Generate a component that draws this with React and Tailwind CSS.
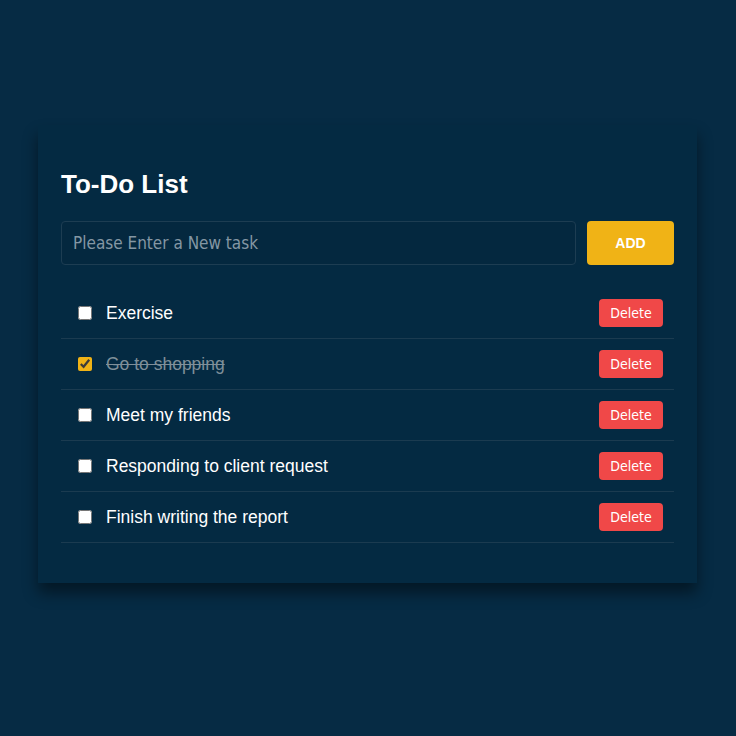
import { useState } from 'react';

const INITIAL_TASKS = [
  { id: 1, text: 'Exercise', done: false },
  { id: 2, text: 'Go to shopping', done: true },
  { id: 3, text: 'Meet my friends', done: false },
  { id: 4, text: 'Responding to client request', done: false },
  { id: 5, text: 'Finish writing the report', done: false },
];

export default function App() {
  const [tasks, setTasks] = useState(INITIAL_TASKS);
  const [draft, setDraft] = useState('');

  const addTask = () => {
    if (!draft.trim()) return;
    setTasks([...tasks, { id: Date.now(), text: draft.trim(), done: false }]);
    setDraft('');
  };

  const toggle = (id) => setTasks(tasks.map((t) => (t.id === id ? { ...t, done: !t.done } : t)));
  const remove = (id) => setTasks(tasks.filter((t) => t.id !== id));

  return (
    <div className="min-h-[736px] w-full bg-[#062b44] pt-[125px] px-[38px] font-['Liberation_Sans',Arial,sans-serif]">
      {/* Card */}
      <div className="w-[659px] bg-[#042a42] px-[23px] pt-[43px] pb-[40px] shadow-[0_10px_14px_rgba(0,0,0,0.45)]">
        <h1 className="text-[26px] leading-[32px] font-bold text-white mb-[21px]">To-Do List</h1>

        <div className="flex gap-[11px] mb-[23px]">
          <input
            value={draft}
            onChange={(e) => setDraft(e.target.value)}
            placeholder="Please Enter a New task"
            className="flex-1 h-[44px] rounded-[4px] border border-[#1d3d52] bg-[#04283f] px-[11px] text-[17px] text-white placeholder:text-[#8497a4] outline-none font-['DejaVu_Sans_Condensed','DejaVu_Sans',sans-serif]"
          />
          <button
            onClick={addTask}
            className="w-[87px] h-[44px] rounded-[4px] bg-[#f0b316] text-white text-[14px] font-bold"
          >
            ADD
          </button>
        </div>

        <ul>
          {tasks.map((t) => (
            <li key={t.id} className="flex items-center h-[51px] pl-[17px] pr-[11px] border-b border-[#1b3b50]">
              <input
                type="checkbox"
                checked={t.done}
                onChange={() => toggle(t.id)}
                className="w-[14px] h-[14px] accent-[#f0b316] mr-[14px]"
              />
              <span className={`flex-1 text-[17.5px] ${t.done ? 'line-through text-[#7f8f99]' : 'text-white'}`}>{t.text}</span>
              <button
                onClick={() => remove(t.id)}
                className="w-[64px] h-[28px] rounded-[4px] bg-[#f04848] text-white text-[14px] font-['DejaVu_Sans_Condensed','DejaVu_Sans',sans-serif]"
              >
                Delete
              </button>
            </li>
          ))}
        </ul>
      </div>
    </div>
  );
}
